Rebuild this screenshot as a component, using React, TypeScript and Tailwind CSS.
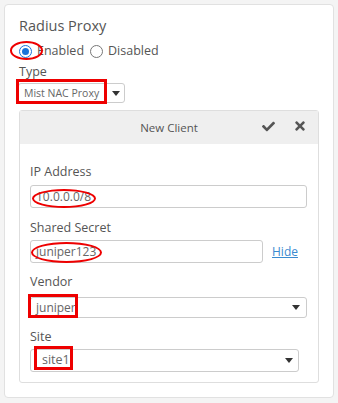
import { FaCheck, FaTimes } from "react-icons/fa";

function Caret() {
  return (
    <svg width="8" height="5" viewBox="0 0 8 5" className="fill-[#333]">
      <path d="M0 0 H8 L4 5 Z" />
    </svg>
  );
}

function Radio({ checked }: { checked?: boolean }) {
  return (
    <span
      className={
        checked
          ? "flex h-[13px] w-[13px] items-center justify-center rounded-full border-[1.5px] border-[#1a73d9]"
          : "flex h-[13px] w-[13px] items-center justify-center rounded-full border-[1.5px] border-[#777]"
      }
    >
      {checked && <span className="h-[7px] w-[7px] rounded-full bg-[#1a73d9]" />}
    </span>
  );
}

function App() {
  return (
    <div className="relative h-[403px] w-[338px] bg-[#f4f4f4] pl-[4px] pt-[4px] font-['Open_Sans',sans-serif] text-[#555]">
      <div className="h-[394px] w-[330px] rounded-[4px] border border-[#e1e1e1] bg-white pl-[14px] pt-[11px]">
        <div className="text-[14.5px] leading-[20px] text-[#555]">Radius Proxy</div>

        <div className="mt-[5px] flex h-[20px] items-center text-[12.5px]">
          <Radio checked />
          <span className="ml-[5px]">Enabled</span>
          <span className="ml-[6px]">
            <Radio />
          </span>
          <span className="ml-[5px]">Disabled</span>
        </div>

        <div className="mt-[2px] text-[12.5px] leading-[18px]">Type</div>

        <div className="mt-[2px] -ml-[1px] flex h-[20px] w-[107px] items-center rounded-[3px] border border-[#ccc]">
          <span className="flex-1 whitespace-nowrap pl-[5px] text-[10.5px] leading-[18px] text-[#666]">Mist NAC Proxy</span>
          <span className="flex h-full w-[18px] items-center justify-center border-l border-[#ccc]">
            <Caret />
          </span>
        </div>

        <div className="mt-[7px] w-[300px] rounded-[3px] border border-[#dedede]">
          <div className="relative flex h-[33px] items-center justify-center bg-[#efefef]">
            <span className="text-[11.5px] text-[#555]">New Client</span>
            <FaCheck className="absolute left-[242px] top-[9px] text-[13px] text-[#555]" />
            <FaTimes className="absolute left-[273px] top-[8px] text-[14px] text-[#555]" />
          </div>

          <div className="pl-[10px] pr-[11px] pt-[20px] pb-[10px] text-[12.5px]">
            <div className="leading-[16px]">IP Address</div>
            <div className="mt-[5px] flex h-[23px] w-[277px] items-center rounded-[3px] border border-[#ccc] pl-[5px] text-[12px] text-[#666]">
              10.0.0.0/8
            </div>

            <div className="mt-[12px] leading-[16px]">Shared Secret</div>
            <div className="mt-[4px] flex items-center">
              <div className="flex h-[23px] w-[233px] items-center rounded-[3px] border border-[#ccc] pl-[5px] text-[12px] text-[#666]">
                juniper123
              </div>
              <a className="ml-[9px] text-[12px] text-[#3a8ad0] underline">Hide</a>
            </div>

            <div className="mt-[11px] leading-[16px]">Vendor</div>
            <div className="mt-[7px] flex h-[21px] w-[277px] items-center justify-between rounded-[3px] border border-[#ccc] pl-[5px] pr-[6px] text-[12px] text-[#666]">
              <span>juniper</span>
              <Caret />
            </div>

            <div className="mt-[11px] leading-[16px]">Site</div>
            <div className="mt-[4px] flex h-[23px] w-[269px] items-center justify-between rounded-[3px] border border-[#ccc] pl-[11px] pr-[5px] text-[12.5px] text-[#666]">
              <span>site1</span>
              <Caret />
            </div>
          </div>
        </div>
      </div>

      {/* red annotation marks */}
      <div className="absolute left-[10px] top-[41px] h-[19px] w-[33px] rounded-[50%] border-[2.5px] border-[#e00]" />
      <div className="absolute left-[16px] top-[79px] h-[25px] w-[91px] border-[3px] border-[#e00]" />
      <div className="absolute left-[32px] top-[189px] h-[19px] w-[64px] rounded-[50%] border-[2.5px] border-[#e00]" />
      <div className="absolute left-[31px] top-[242px] h-[21px] w-[71px] rounded-[50%] border-[2.5px] border-[#e00]" />
      <div className="absolute left-[28px] top-[294px] h-[24px] w-[50px] border-[3px] border-[#e00]" />
      <div className="absolute left-[34px] top-[346px] h-[24px] w-[39px] border-[3px] border-[#e00]" />
    </div>
  );
}

export default App;
